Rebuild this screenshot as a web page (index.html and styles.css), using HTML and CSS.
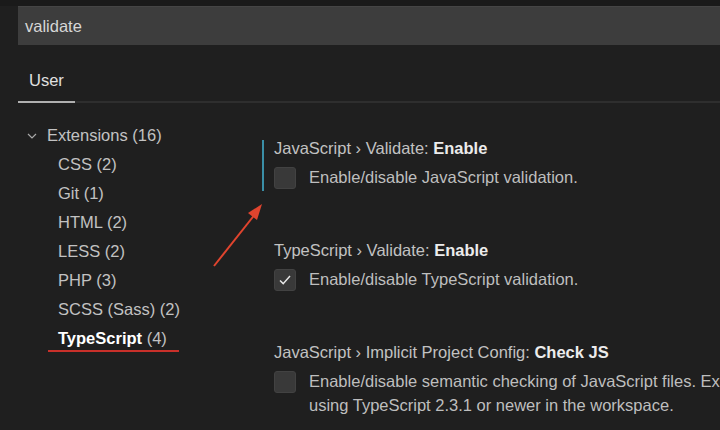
FILE: index.html
```html
<!DOCTYPE html>
<html lang="en">
<head>
  <meta charset="UTF-8" />
  <title>Settings</title>
  <link rel="stylesheet" href="styles.css">
</head>
<body>
  <div class="topstrip"></div>
  <div class="search">validate</div>

  <div class="tabs">
    <div class="tab active">User</div>
  </div>

  <div class="main">
    <div class="tree">
      <div class="row group">
        <svg class="chevron" width="10" height="6" viewBox="0 0 10 6"><path d="M1 1 L5 5 L9 1" fill="none" stroke="#a8a8a8" stroke-width="1.2"/></svg>
        Extensions (16)
      </div>
      <div class="row item">CSS (2)</div>
      <div class="row item">Git (1)</div>
      <div class="row item">HTML (2)</div>
      <div class="row item">LESS (2)</div>
      <div class="row item">PHP (3)</div>
      <div class="row item">SCSS (Sass) (2)</div>
      <div class="row item selected"><span class="marked"><b>TypeScript</b> (4)</span></div>
    </div>

    <div class="settings">
      <div class="setting focused">
        <div class="title">JavaScript › Validate: <b>Enable</b></div>
        <div class="value">
          <span class="checkbox"></span>
          <div class="desc">Enable/disable JavaScript validation.</div>
        </div>
      </div>

      <div class="setting">
        <div class="title">TypeScript › Validate: <b>Enable</b></div>
        <div class="value">
          <span class="checkbox">
            <svg width="22" height="22" viewBox="0 0 22 22"><path d="M5.5 11.5 L9 15 L16.5 6.5" fill="none" stroke="#e8e8e8" stroke-width="1.6"/></svg>
          </span>
          <div class="desc">Enable/disable TypeScript validation.</div>
        </div>
      </div>

      <div class="setting">
        <div class="title">JavaScript › Implicit Project Config: <b>Check JS</b></div>
        <div class="value">
          <span class="checkbox"></span>
          <div class="desc">Enable/disable semantic checking of JavaScript files. Existing jsconfig.json or tsconfig.json files override this setting. Requires<br>using TypeScript 2.3.1 or newer in the workspace.</div>
        </div>
      </div>
    </div>
  </div>

  <!-- annotation arrow -->
  <svg class="arrow" width="70" height="75" viewBox="0 0 70 75">
    <path d="M4 72 L46 19" stroke="#e0442e" stroke-width="2" fill="none"/>
    <path d="M52 10 L38 19 L47 26 Z" fill="#e0442e"/>
  </svg>
</body>
</html>
```

FILE: styles.css
```css
body {
  margin: 0;
  background: #1f1f1f;
  font-family: "Liberation Sans", Arial, sans-serif;
  font-size: 16.5px;
  color: #c8c8c8;
  width: 720px;
  height: 430px;
  overflow: hidden;
  position: relative;
}
.topstrip {
  height: 6px;
  background: #1a1a1a;
}
.search {
  margin-left: 18px;
  height: 39px;
  line-height: 39px;
  padding-left: 7px;
  background: #3d3d3d;
  border-top: 1px solid #454545;
  box-sizing: border-box;
  color: #d6d6d6;
}
.tabs {
  margin-left: 18px;
  height: 56px;
  display: flex;
  align-items: flex-end;
  border-bottom: 2px solid #2e2e2e;
}
.tab {
  width: 57px;
  padding-left: 11px;
  box-sizing: border-box;
  height: 36px;
  line-height: 26px;
  color: #e0e0e0;
  border-bottom: 2px solid #b0b0b0;
  margin-bottom: -2px;
}
.main {
  display: flex;
}
.tree {
  flex: none;
  width: 262px;
  padding-top: 18px;
}
.row {
  height: 29px;
  line-height: 29px;
  white-space: nowrap;
}
.group {
  padding-left: 27px;
  display: flex;
  align-items: center;
  gap: 10px;
  color: #c2c2c2;
}
.item {
  padding-left: 58px;
  color: #c2c2c2;
}
.selected b {
  color: #ffffff;
}
.marked {
  position: relative;
}
.marked::after {
  content: "";
  position: absolute;
  left: -10px;
  right: -12px;
  bottom: -5px;
  height: 2px;
  background: #c9302a;
}
.settings {
  flex: 1;
  min-width: 0;
  padding-top: 37px;
  display: flex;
  flex-direction: column;
  gap: 51px;
  white-space: nowrap;
}
.setting {
  padding-left: 10px;
  border-left: 2px solid transparent;
  height: 51px;
}
.setting.focused {
  border-left-color: #3a8ea6;
}
.title {
  height: 16px;
  line-height: 16px;
  color: #c2c2c2;
}
.title b {
  color: #ececec;
}
.value {
  display: flex;
  gap: 13px;
  margin-top: 11px;
}
.checkbox {
  flex: none;
  width: 22px;
  height: 22px;
  background: #393939;
  border: 1px solid #424242;
  border-radius: 3px;
  box-sizing: border-box;
  display: flex;
  align-items: center;
  justify-content: center;
}
.checkbox svg {
  display: block;
}
.desc {
  line-height: 24px;
  margin-top: -2px;
  color: #bebebe;
}
.arrow {
  position: absolute;
  left: 210px;
  top: 194px;
}
```
